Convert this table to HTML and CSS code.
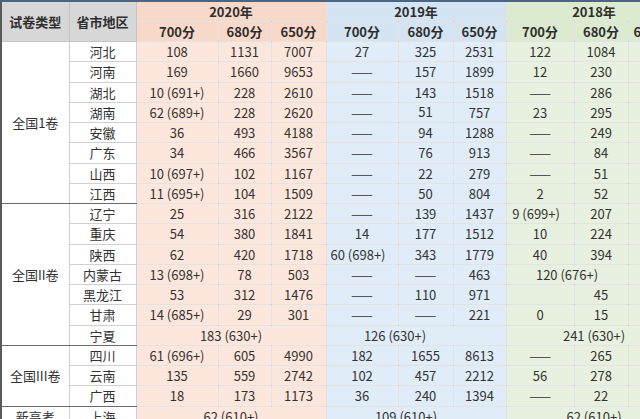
FILE: index.html
```html
<!DOCTYPE html>
<html lang="zh">
<head>
<meta charset="utf-8">
<title>高考分数段统计</title>
<link rel="stylesheet" href="styles.css">
</head>
<body>
<table class="sheet">
  <colgroup>
    <col class="w-type"><col class="w-prov">
    <col class="w-a"><col class="w-b"><col class="w-c">
    <col class="w-d"><col class="w-e"><col class="w-f">
    <col class="w-g"><col class="w-h"><col class="w-i">
  </colgroup>
  <thead>
    <tr class="h1">
      <th rowspan="2" class="gray">试卷类型</th>
      <th rowspan="2" class="gray">省市地区</th>
      <th colspan="3" class="y20h">2020年</th>
      <th colspan="3" class="y19h">2019年</th>
      <th colspan="3" class="y18h">2018年</th>
    </tr>
    <tr class="h2">
      <th class="y20h">700分</th><th class="y20h">680分</th><th class="y20h">650分</th>
      <th class="y19h">700分</th><th class="y19h">680分</th><th class="y19h">650分</th>
      <th class="y18h">700分</th><th class="y18h">680分</th><th class="y18h edge">650分</th>
    </tr>
  </thead>
  <tbody>
    <tr>
      <td rowspan="8" class="type grp">全国1卷</td>
      <td class="prov">河北</td>
      <td class="y20">108</td><td class="y20">1131</td><td class="y20">7007</td>
      <td class="y19">27</td><td class="y19">325</td><td class="y19">2531</td>
      <td class="y18">122</td><td class="y18">1084</td><td class="y18"></td>
    </tr>
    <tr>
      <td class="prov">河南</td>
      <td class="y20">169</td><td class="y20">1660</td><td class="y20">9653</td>
      <td class="y19">——</td><td class="y19">157</td><td class="y19">1899</td>
      <td class="y18">12</td><td class="y18">230</td><td class="y18"></td>
    </tr>
    <tr>
      <td class="prov">湖北</td>
      <td class="y20">10 (691+)</td><td class="y20">228</td><td class="y20">2610</td>
      <td class="y19">——</td><td class="y19">143</td><td class="y19">1518</td>
      <td class="y18">——</td><td class="y18">286</td><td class="y18"></td>
    </tr>
    <tr>
      <td class="prov">湖南</td>
      <td class="y20">62 (689+)</td><td class="y20">228</td><td class="y20">2620</td>
      <td class="y19">——</td><td class="y19 up">51</td><td class="y19">757</td>
      <td class="y18">23</td><td class="y18">295</td><td class="y18"></td>
    </tr>
    <tr>
      <td class="prov">安徽</td>
      <td class="y20">36</td><td class="y20">493</td><td class="y20">4188</td>
      <td class="y19">——</td><td class="y19">94</td><td class="y19">1288</td>
      <td class="y18">——</td><td class="y18">249</td><td class="y18"></td>
    </tr>
    <tr>
      <td class="prov">广东</td>
      <td class="y20">34</td><td class="y20">466</td><td class="y20">3567</td>
      <td class="y19">——</td><td class="y19">76</td><td class="y19">913</td>
      <td class="y18">——</td><td class="y18">84</td><td class="y18"></td>
    </tr>
    <tr>
      <td class="prov">山西</td>
      <td class="y20">10 (697+)</td><td class="y20">102</td><td class="y20">1167</td>
      <td class="y19">——</td><td class="y19">22</td><td class="y19">279</td>
      <td class="y18">——</td><td class="y18">51</td><td class="y18"></td>
    </tr>
    <tr>
      <td class="prov grp">江西</td>
      <td class="y20">11 (695+)</td><td class="y20">104</td><td class="y20">1509</td>
      <td class="y19">——</td><td class="y19">50</td><td class="y19">804</td>
      <td class="y18">2</td><td class="y18">52</td><td class="y18"></td>
    </tr>
    <tr>
      <td rowspan="7" class="type grp">全国II卷</td>
      <td class="prov">辽宁</td>
      <td class="y20">25</td><td class="y20">316</td><td class="y20">2122</td>
      <td class="y19">——</td><td class="y19">139</td><td class="y19">1437</td>
      <td class="y18 lean">9 (699+)</td><td class="y18">207</td><td class="y18"></td>
    </tr>
    <tr>
      <td class="prov">重庆</td>
      <td class="y20">54</td><td class="y20">380</td><td class="y20">1841</td>
      <td class="y19">14</td><td class="y19">177</td><td class="y19">1512</td>
      <td class="y18">10</td><td class="y18">224</td><td class="y18"></td>
    </tr>
    <tr>
      <td class="prov">陕西</td>
      <td class="y20">62</td><td class="y20">420</td><td class="y20">1718</td>
      <td class="y19 lean">60 (698+)</td><td class="y19">343</td><td class="y19">1779</td>
      <td class="y18">40</td><td class="y18">394</td><td class="y18"></td>
    </tr>
    <tr>
      <td class="prov">内蒙古</td>
      <td class="y20">13 (698+)</td><td class="y20">78</td><td class="y20">503</td>
      <td class="y19">——</td><td class="y19">——</td><td class="y19">463</td>
      <td colspan="2" class="y18">120 (676+)</td><td class="y18"></td>
    </tr>
    <tr>
      <td class="prov">黑龙江</td>
      <td class="y20">53</td><td class="y20">312</td><td class="y20">1476</td>
      <td class="y19">——</td><td class="y19">110</td><td class="y19">971</td>
      <td class="y18"></td><td class="y18">45</td><td class="y18"></td>
    </tr>
    <tr>
      <td class="prov">甘肃</td>
      <td class="y20">14 (685+)</td><td class="y20">29</td><td class="y20">301</td>
      <td class="y19">——</td><td class="y19">——</td><td class="y19">221</td>
      <td class="y18">0</td><td class="y18">15</td><td class="y18"></td>
    </tr>
    <tr>
      <td class="prov grp">宁夏</td>
      <td colspan="3" class="y20">183 (630+)</td>
      <td colspan="3" class="y19 shift-l">126 (630+)</td>
      <td colspan="3" class="y18">241 (630+)</td>
    </tr>
    <tr>
      <td rowspan="3" class="type grp">全国III卷</td>
      <td class="prov">四川</td>
      <td class="y20">61 (696+)</td><td class="y20">605</td><td class="y20">4990</td>
      <td class="y19">182</td><td class="y19">1655</td><td class="y19">8613</td>
      <td class="y18">——</td><td class="y18">265</td><td class="y18"></td>
    </tr>
    <tr>
      <td class="prov">云南</td>
      <td class="y20">135</td><td class="y20">559</td><td class="y20">2742</td>
      <td class="y19">102</td><td class="y19">457</td><td class="y19">2212</td>
      <td class="y18">56</td><td class="y18">278</td><td class="y18"></td>
    </tr>
    <tr>
      <td class="prov grp">广西</td>
      <td class="y20">18</td><td class="y20">173</td><td class="y20">1173</td>
      <td class="y19">36</td><td class="y19">240</td><td class="y19">1394</td>
      <td class="y18">——</td><td class="y18">22</td><td class="y18"></td>
    </tr>
    <tr>
      <td class="type">新高考</td>
      <td class="prov">上海</td>
      <td colspan="3" class="y20">62 (610+)</td>
      <td colspan="3" class="y19 shift-s">109 (610+)</td>
      <td colspan="3" class="y18">62 (610+)</td>
    </tr>
  </tbody>
</table>
</body>
</html>
```

FILE: styles.css
```css
html, body {
  margin: 0;
  padding: 0;
  overflow: hidden;
  background: #ffffff;
}

body {
  width: 640px;
  height: 419px;
}

.sheet {
  border-collapse: collapse;
  table-layout: fixed;
  width: 681px;
  font-family: "Noto Sans CJK SC", "Noto Sans", sans-serif;
  font-size: 13px;
  color: #333333;
  border-top: 2px solid #4a6684;
  border-left: 2px solid #5a5a5a;
}

.w-type { width: 68px; }
.w-prov { width: 67px; }
.w-a { width: 82px; }
.w-b { width: 53px; }
.w-c { width: 55px; }
.w-d { width: 72px; }
.w-e { width: 55px; }
.w-f { width: 53px; }
.w-g { width: 68px; }
.w-h { width: 54px; }
.w-i { width: 54px; }

th, td {
  padding: 0;
  text-align: center;
  vertical-align: middle;
  line-height: 1;
  white-space: nowrap;
  overflow: hidden;
  border: 1px solid rgba(0, 0, 0, 0.11);
}

th {
  font-weight: 700;
  color: #2e2e2e;
}

.h1 { height: 20px; }
.h2 { height: 20.5px; }
tbody tr { height: 20.25px; }

.gray { background: #d7d7d7; border-color: #c4c4c4; }

.y20h { background: #f8d9c9; }
.y19h { background: #d4e4f2; }
.y18h { background: #dcebd0; }

.y20 { background: #fde6db; }
.y19 { background: #e0ecf7; }
.y18 { background: #e8f1df; }

.type, .prov { background: #ffffff; border-color: #d0d0d0; }

.grp { border-bottom: 1px solid #6a6a6a; }

.up { vertical-align: top; padding-top: 2px; }

.lean { padding-right: 8px; }

.edge { text-align: left; padding-left: 5px; }

.shift-l { padding-right: 42px; }
.shift-s { padding-right: 20px; }
```
